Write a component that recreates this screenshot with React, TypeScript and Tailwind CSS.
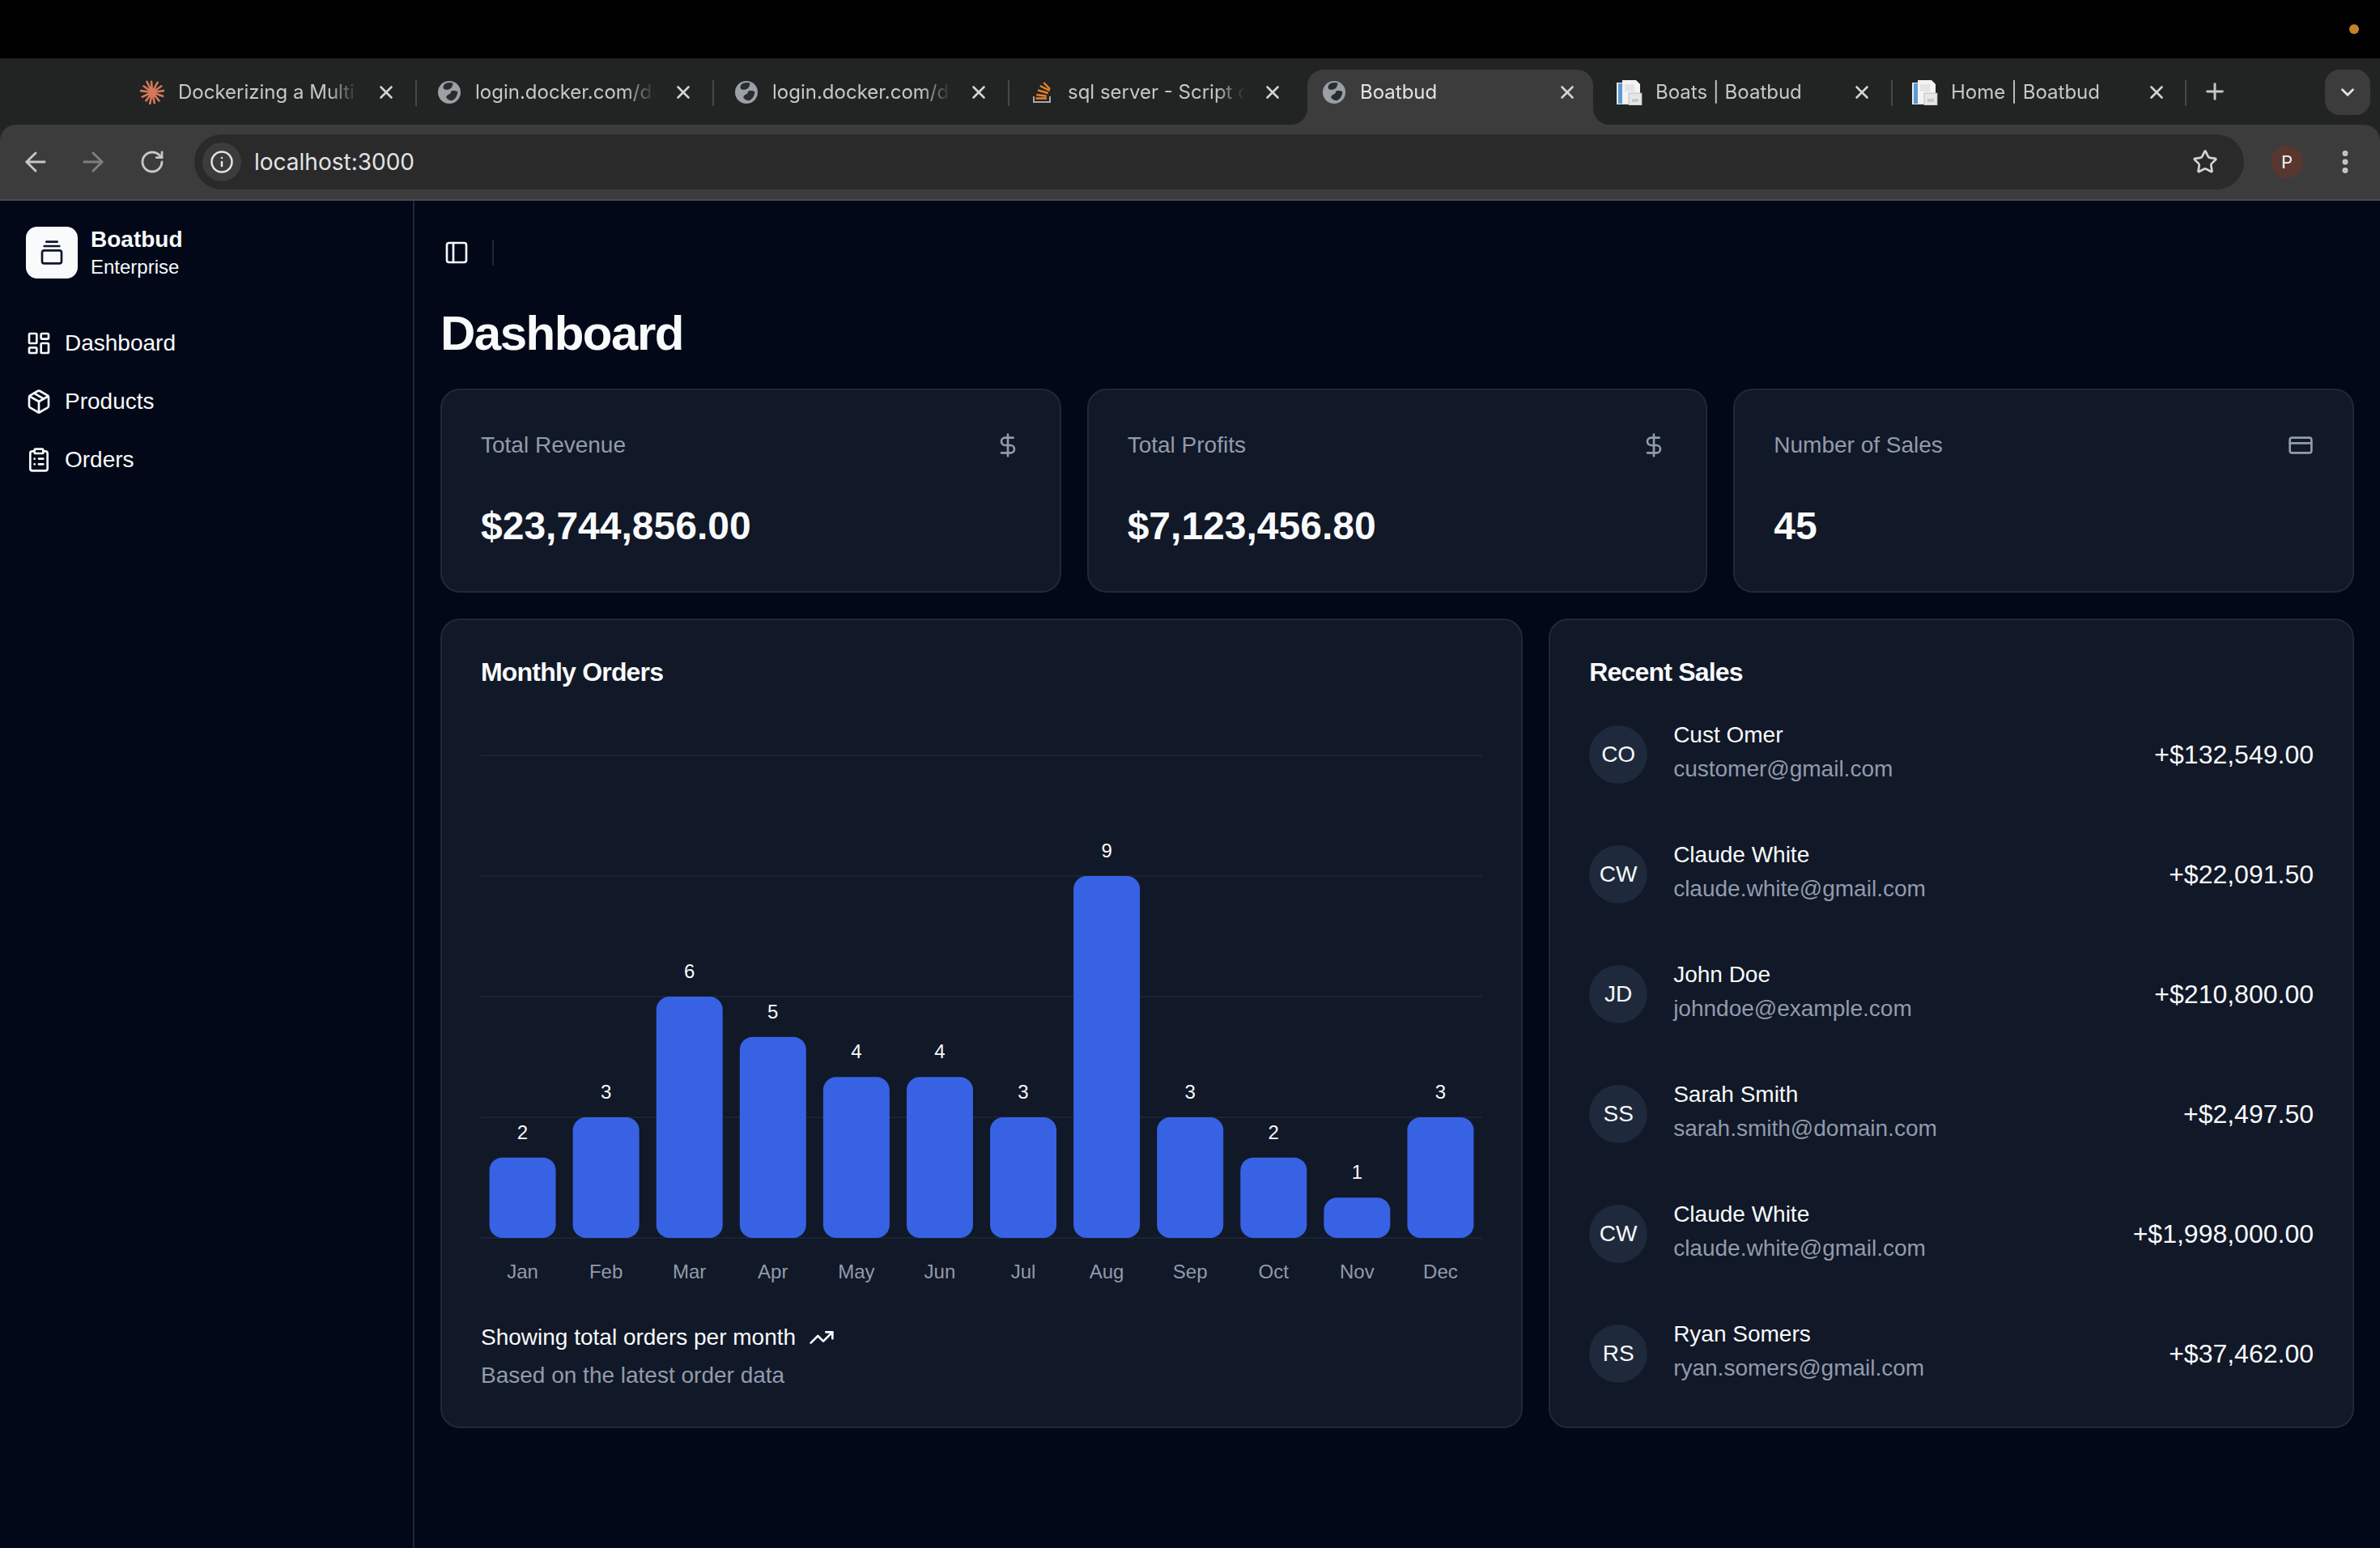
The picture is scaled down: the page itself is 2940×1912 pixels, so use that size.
import React from 'react';
import {
  ArrowLeft,
  ArrowRight,
  ChevronDown,
  ClipboardList,
  CreditCard,
  DollarSign,
  EllipsisVertical,
  GalleryVerticalEnd,
  Info,
  LayoutDashboard,
  Package,
  PanelLeft,
  Plus,
  RotateCw,
  Star,
  TrendingUp,
  X,
} from 'lucide-react';

const ClaudeIcon = () => (
  <svg viewBox="0 0 32 32" className="w-[30px] h-[30px]" stroke="#d4785c" strokeWidth="2.8" strokeLinecap="round" fill="#d4785c">
    <circle cx="16" cy="16" r="5" stroke="none" />
    <path d="M16 16L15 2M16 16L23 3M16 16L28 8M16 16L31 14M16 16L30 21M16 16L25 27M16 16L19 30M16 16L13 31M16 16L8 27M16 16L3 22M16 16L1 14M16 16L5 8M16 16L9 2" fill="none" />
  </svg>
);

const GlobeIcon = () => (
  <svg viewBox="0 0 30 30" className="w-[28px] h-[28px]">
    <circle cx="15" cy="15" r="15" fill="#9aa0a6" />
    <path d="M9 4C12 2 17 1.5 20 3C19 7 18 11 13 11.5C10 12 7 11 7 8.5C7 7 8 5 9 4Z" fill="#2a2d2e" />
    <path d="M18 13C21 12.5 24 13 26 14C26 19 24 23 19 26C16 26 13 25 11 22C11 19 14 18 16 17C17 16 17 14 18 13Z" fill="#2a2d2e" />
  </svg>
);

const StackIcon = () => (
  <svg viewBox="0 0 22 26" className="w-[22px] h-[26px]" fill="none">
    <path d="M1 18v7h20v-7" stroke="#a5a9ad" strokeWidth="2" />
    <path d="M3.5 20.5h13.5M4.3 16l12.4 1.7M6 10.3l12.7 3.7M8.7 5l12 6M13.3 1l7.7 8" stroke="#e8832a" strokeWidth="2.4" />
  </svg>
);

const DocIcon = () => (
  <svg viewBox="0 0 32 31" className="w-[32px] h-[31px]">
    <rect x="0" y="3" width="20" height="27" fill="#e9edf1" />
    <rect x="2" y="4" width="5" height="25" fill="#5b9bd5" />
    <path d="M7 0H24L29 5V27H7z" fill="#f4f4f4" />
    <rect x="10" y="5" width="12" height="9" fill="#e1e4e8" />
    <path d="M15 16H31V31H15z" fill="#e6e6e6" stroke="#b4b4b4" strokeWidth="0.8" />
    <rect x="19" y="23" width="8" height="4" fill="#c6c9cc" />
  </svg>
);

const tabs = [
  { title: 'Dockerizing a Multi-Container App', icon: <ClaudeIcon />, box: 'w-[367px] pl-6 pr-[25px]' },
  { title: 'login.docker.com/device', icon: <GlobeIcon />, box: 'w-[367px] pl-6 pr-[25px]' },
  { title: 'login.docker.com/devices', icon: <GlobeIcon />, box: 'w-[365px] pl-6 pr-[25px]' },
  { title: 'sql server - Script data', icon: <StackIcon />, box: 'w-[367px] pl-6 pr-[29px]', noSeparator: true },
  { title: 'Boatbud', icon: <GlobeIcon />, box: 'w-[353px] ml-[1px] mr-[5px] pl-[17px] pr-[19px]', active: true },
  { title: 'Boats | Boatbud', icon: <DocIcon />, box: 'w-[365px] pl-6 pr-[25px]' },
  { title: 'Home | Boatbud', icon: <DocIcon />, box: 'w-[363px] pl-6 pr-[24px]' },
];

const BrowserChrome = () => (
  <div className="bg-[#212423]">
    <div className="h-[72px] bg-black flex justify-end items-center pr-[26px]">
      <div className="w-3 h-3 rounded-full bg-[#c8812c]" />
    </div>
    <div className="h-[82px] flex items-start pl-[148px] pt-[14px]">
      {tabs.map((tab) => (
        <div
          key={tab.title}
          className={`${tab.box} h-[68px] shrink-0 flex items-start pt-[12px] relative ${
            tab.active ? 'bg-[#3c3c3c] rounded-t-[20px]' : ''
          }`}
        >
          <div className="w-[32px] h-[32px] flex items-center justify-center shrink-0">{tab.icon}</div>
          <span
            className={`ml-[16px] flex-1 overflow-hidden whitespace-nowrap text-[24px] leading-[32px] [mask-image:linear-gradient(to_right,black_80%,transparent_96%)] ${
              tab.active ? 'text-[#e3e3e3]' : 'text-[#c7c7c7]'
            }`}
          >
            {tab.title}
          </span>
          <X className="w-[26px] h-[26px] mt-[3px] ml-[12px] text-[#d4d4d4] shrink-0" strokeWidth={2.4} />
          {tab.active && (
            <>
              <div className="absolute bottom-0 left-[-20px] w-[20px] h-[20px] bg-[#3c3c3c]">
                <div className="w-full h-full bg-[#212423] rounded-br-[20px]" />
              </div>
              <div className="absolute bottom-0 right-[-20px] w-[20px] h-[20px] bg-[#3c3c3c]">
                <div className="w-full h-full bg-[#212423] rounded-bl-[20px]" />
              </div>
            </>
          )}
          {!tab.active && !tab.noSeparator && <div className="absolute right-0 top-[13px] w-[2px] h-[32px] bg-[#474747]" />}
        </div>
      ))}
      <Plus className="w-[32px] h-[32px] mt-[11px] ml-[19px] text-[#c7c7c7]" strokeWidth={2.2} />
      <div className="ml-[120px] w-[56px] h-[56px] rounded-[18px] bg-[#3c3c3c] flex items-center justify-center">
        <ChevronDown className="w-[26px] h-[26px] text-[#e3e3e3]" strokeWidth={2.6} />
      </div>
    </div>
    <div className="h-[92px] bg-[#3c3c3c] rounded-t-[20px] flex items-center pl-[25px]">
      <ArrowLeft className="w-[38px] h-[38px] text-[#c7c7c7]" strokeWidth={1.8} />
      <ArrowRight className="w-[38px] h-[38px] ml-[33px] text-[#7f7f7f]" strokeWidth={1.8} />
      <RotateCw className="w-[32px] h-[32px] ml-[38px] text-[#c7c7c7]" strokeWidth={2.1} />
      <div className="ml-[36px] w-[2532px] h-[68px] rounded-full bg-[#2a2a2a] flex items-center pl-[10px] pr-[32px]">
        <div className="w-[48px] h-[48px] rounded-full bg-[#3c3c3c] flex items-center justify-center">
          <Info className="w-[30px] h-[30px] text-[#e3e3e3]" strokeWidth={2} />
        </div>
        <span className="ml-[16px] flex-1 text-[#e3e3e3] text-[28px] leading-none">localhost:3000</span>
        <Star className="w-[32px] h-[32px] text-[#d4d4d4]" strokeWidth={2} />
      </div>
      <div className="ml-[33px] w-[40px] h-[40px] rounded-full bg-[#57372f] flex items-center justify-center text-[#f0f0f0] text-[22px]">
        P
      </div>
      <EllipsisVertical className="ml-[34px] w-[36px] h-[36px] text-[#c7c7c7]" strokeWidth={2.6} />
    </div>
    <div className="h-[2px] bg-[#4a4a4a]" />
  </div>
);

const navItems = [
  { label: 'Dashboard', icon: LayoutDashboard },
  { label: 'Products', icon: Package },
  { label: 'Orders', icon: ClipboardList },
];

const Sidebar = () => (
  <aside className="w-[512px] shrink-0 border-r-2 border-[#1e293b] flex flex-col">
    <div className="p-8 flex gap-4">
      <div className="w-16 h-16 rounded-[14px] bg-[#f8fafc] flex items-center justify-center">
        <GalleryVerticalEnd className="w-8 h-8 text-[#0f172a]" />
      </div>
      <div className="flex flex-col gap-1">
        <span className="text-[28px] leading-8 font-bold text-[#f8fafc]">Boatbud</span>
        <span className="text-[24px] leading-7 text-[#f8fafc]">Enterprise</span>
      </div>
    </div>
    <nav className="px-8 mt-4 flex flex-col gap-2">
      {navItems.map(({ label, icon: Icon }) => (
        <div key={label} className="h-16 flex items-center gap-4 text-[28px] text-[#f8fafc]">
          <Icon className="w-8 h-8" />
          {label}
        </div>
      ))}
    </nav>
  </aside>
);

const statCards = [
  { title: 'Total Revenue', value: '$23,744,856.00', icon: DollarSign },
  { title: 'Total Profits', value: '$7,123,456.80', icon: DollarSign },
  { title: 'Number of Sales', value: '45', icon: CreditCard },
];

const monthly = [
  ['Jan', 2],
  ['Feb', 3],
  ['Mar', 6],
  ['Apr', 5],
  ['May', 4],
  ['Jun', 4],
  ['Jul', 3],
  ['Aug', 9],
  ['Sep', 3],
  ['Oct', 2],
  ['Nov', 1],
  ['Dec', 3],
] as const;

const CHART_WIDTH = 1237;
const BAND = CHART_WIDTH / 12;
const UNIT = 49.67;
const BASELINE = 635;

const OrdersChart = () => (
  <svg viewBox={`0 0 ${CHART_WIDTH} 694`} className="w-[1237px] h-[694px] block" fontFamily="'Liberation Sans', Arial, sans-serif">
    {[0, 3, 6, 9, 12].map((v) => (
      <line key={v} x1="0" x2={CHART_WIDTH} y1={BASELINE - v * UNIT} y2={BASELINE - v * UNIT} stroke="#1a2435" strokeWidth="2" />
    ))}
    {monthly.map(([month, count], i) => {
      const center = BAND * i + BAND / 2;
      const top = BASELINE - count * UNIT;
      return (
        <g key={month}>
          <rect x={center - 41} y={top} width="82" height={count * UNIT} rx="16" fill="#3762e4" />
          <text x={center} y={top - 23} textAnchor="middle" fontSize="24" fill="#f8fafc">
            {count}
          </text>
          <text x={center} y={685} textAnchor="middle" fontSize="24" fill="#919bad">
            {month}
          </text>
        </g>
      );
    })}
  </svg>
);

const sales = [
  { initials: 'CO', name: 'Cust Omer', email: 'customer@gmail.com', amount: '+$132,549.00' },
  { initials: 'CW', name: 'Claude White', email: 'claude.white@gmail.com', amount: '+$22,091.50' },
  { initials: 'JD', name: 'John Doe', email: 'johndoe@example.com', amount: '+$210,800.00' },
  { initials: 'SS', name: 'Sarah Smith', email: 'sarah.smith@domain.com', amount: '+$2,497.50' },
  { initials: 'CW', name: 'Claude White', email: 'claude.white@gmail.com', amount: '+$1,998,000.00' },
  { initials: 'RS', name: 'Ryan Somers', email: 'ryan.somers@gmail.com', amount: '+$37,462.00' },
];

export default function App() {
  return (
    <div className="w-[2940px] h-[1912px] bg-[#020817] font-['Liberation_Sans',Arial,sans-serif] overflow-hidden flex flex-col">
      <div className="font-['Inter',sans-serif]">
        <BrowserChrome />
      </div>
      <div className="flex flex-1 min-h-0">
        <Sidebar />
        <main className="flex-1 min-w-0 flex flex-col">
          <header className="h-32 flex items-center px-8 shrink-0">
            <div className="w-14 h-14 -ml-2 flex items-center justify-center text-[#f8fafc]">
              <PanelLeft className="w-8 h-8" />
            </div>
            <div className="w-[2px] h-8 bg-[#1e293b] ml-4" />
          </header>
          <div className="px-8 flex flex-col gap-8">
            <h1 className="text-[60px] leading-[72px] font-bold tracking-tight text-[#f8fafc]">Dashboard</h1>
            <div className="grid grid-cols-3 gap-8">
              {statCards.map(({ title, value, icon: Icon }) => (
                <div key={title} className="bg-[#111827] border-2 border-[#1e293b] rounded-[24px] py-12 px-12 flex flex-col gap-12">
                  <div className="flex items-center justify-between h-10">
                    <span className="text-[28px] leading-10 text-[#919bad]">{title}</span>
                    <Icon className="w-8 h-8 text-[#919bad]" />
                  </div>
                  <div className="text-[48px] leading-[64px] font-bold text-[#f8fafc]">{value}</div>
                </div>
              ))}
            </div>
            <div className="grid grid-cols-7 gap-8">
              <section className="col-span-4 bg-[#111827] border-2 border-[#1e293b] rounded-[24px] p-12 flex flex-col gap-12">
                <h2 className="text-[32px] leading-8 font-bold tracking-tight text-[#f8fafc]">Monthly Orders</h2>
                <OrdersChart />
                <div className="flex flex-col gap-4 text-[28px]">
                  <div className="flex items-center gap-4 text-[#f8fafc] leading-8">
                    Showing total orders per month
                    <TrendingUp className="w-8 h-8" />
                  </div>
                  <div className="leading-[30px] text-[#919bad]">Based on the latest order data</div>
                </div>
              </section>
              <section className="col-span-3 bg-[#111827] border-2 border-[#1e293b] rounded-[24px] p-12 flex flex-col gap-12">
                <h2 className="text-[32px] leading-8 font-bold tracking-tight text-[#f8fafc]">Recent Sales</h2>
                <div className="flex flex-col gap-[72px]">
                  {sales.map((sale) => (
                    <div key={sale.email + sale.amount} className="flex items-center h-[76px]">
                      <div className="w-[72px] h-[72px] rounded-full bg-[#1e293b] flex items-center justify-center text-[28px] text-[#f8fafc]">
                        {sale.initials}
                      </div>
                      <div className="ml-8 flex flex-col gap-2">
                        <div className="text-[28px] leading-[28px] text-[#f8fafc]">{sale.name}</div>
                        <div className="text-[28px] leading-10 text-[#919bad]">{sale.email}</div>
                      </div>
                      <div className="ml-auto text-[32px] text-[#f8fafc]">{sale.amount}</div>
                    </div>
                  ))}
                </div>
              </section>
            </div>
          </div>
        </main>
      </div>
    </div>
  );
}
